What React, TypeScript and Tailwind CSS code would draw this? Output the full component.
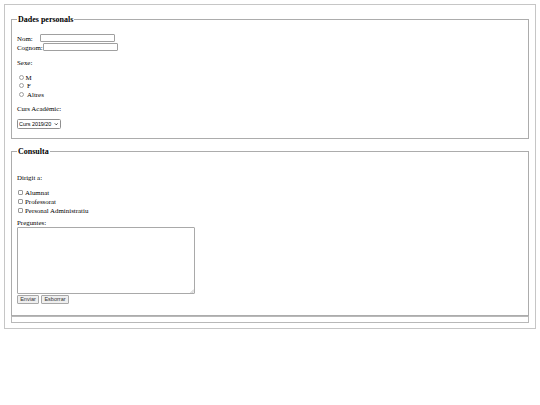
import { ChevronDown } from 'lucide-react'

function Radio({ label, gap }: { label: string; gap: string }) {
  return (
    <label className="flex items-center h-[8.5px]">
      <input
        type="radio"
        name="sexe"
        className="appearance-none ml-[2px] w-[5px] h-[5px] rounded-full border border-[#a0a0a0] bg-white"
      />
      <span className={gap}>{label}</span>
    </label>
  )
}

function Check({ label }: { label: string }) {
  return (
    <label className="flex items-center h-[9px]">
      <input
        type="checkbox"
        className="appearance-none ml-[1px] w-[5px] h-[5px] rounded-[1px] border border-[#999] bg-white"
      />
      <span className="ml-[2px]">{label}</span>
    </label>
  )
}

export default function App() {
  return (
    <div className="w-[540px] h-[405px] bg-white p-[4px] text-black text-[6.9px] leading-[9px] font-['Liberation_Serif',serif]">
      <form className="border border-[#c6c6c6] px-[6px] pt-[10px] pb-[5px]">
        {/* Dades personals */}
        <fieldset className="border border-[#acacac] pl-[5px] pr-[5px] pb-[9.5px]">
          <legend className="px-[1px] font-bold text-[8px] leading-[9px]">Dades personals</legend>

          <div className="mt-[9.5px] flex items-center h-[9px]">
            <span className="w-[23px]">Nom:</span>
            <input type="text" className="w-[75px] h-[8.5px] border border-[#a0a0a0] rounded-[1px] bg-white" />
          </div>
          <div className="flex items-center h-[9px]">
            <span>Cognom:</span>
            <input type="text" className="w-[75px] h-[8.5px] border border-[#a0a0a0] rounded-[1px] bg-white" />
          </div>

          <p className="mt-[6.5px]">Sexe:</p>

          <div className="mt-[6px]">
            <Radio label="M" gap="ml-[1.5px]" />
            <Radio label="F" gap="ml-[3px]" />
            <Radio label="Altres" gap="ml-[3px]" />
          </div>

          <p className="mt-[5.5px]">Curs Acadèmic:</p>

          <div className="mt-[6px] w-[44px] h-[9.5px] flex items-center justify-between border border-[#8f8f8f] rounded-[1.5px] bg-white pl-[1px] pr-[2px]">
            <select className="appearance-none bg-transparent text-[5.4px] leading-[6px] font-['Liberation_Sans',sans-serif] outline-none">
              <option>Curs 2019/20</option>
            </select>
            <ChevronDown className="w-[4.5px] h-[4.5px] shrink-0 text-black" strokeWidth={4} />
          </div>
        </fieldset>

        {/* Consulta */}
        <fieldset className="mt-[8px] border border-[#acacac] pl-[5px] pr-[5px] pb-[11px]">
          <legend className="px-[1px] font-bold text-[8px] leading-[9px]">Consulta</legend>

          <p className="mt-[17px]">Dirigit a:</p>

          <div className="mt-[6px]">
            <Check label="Alumnat" />
            <Check label="Professorat" />
            <Check label="Personal Administratiu" />
          </div>

          <p className="mt-[4px] leading-[8px]">Preguntes:</p>

          <div className="relative w-[178px] h-[66.5px]">
            <textarea className="block w-full h-full border border-[#a9a9a9] rounded-[1px] bg-white resize-none outline-none" />
            <svg className="absolute right-[1px] bottom-[1px] w-[4px] h-[4px]" viewBox="0 0 4 4">
              <path d="M4 0.5 L0.5 4 M4 2.3 L2.3 4" stroke="#a0a0a0" strokeWidth="0.6" />
            </svg>
          </div>

          <div className="mt-[1.5px] flex gap-[2px] font-['Liberation_Sans',sans-serif] text-[5.5px] leading-[6px]">
            <button type="button" className="h-[8.5px] w-[22px] border border-[#a8a8a8] rounded-[1px] bg-[#efefef] text-[#333]">
              Enviar
            </button>
            <button type="button" className="h-[8.5px] w-[28px] border border-[#a8a8a8] rounded-[1px] bg-[#efefef] text-[#333]">
              Esborrar
            </button>
          </div>
        </fieldset>

        <fieldset className="border border-[#b8b8b8] h-[7.5px]" />
      </form>
    </div>
  )
}
